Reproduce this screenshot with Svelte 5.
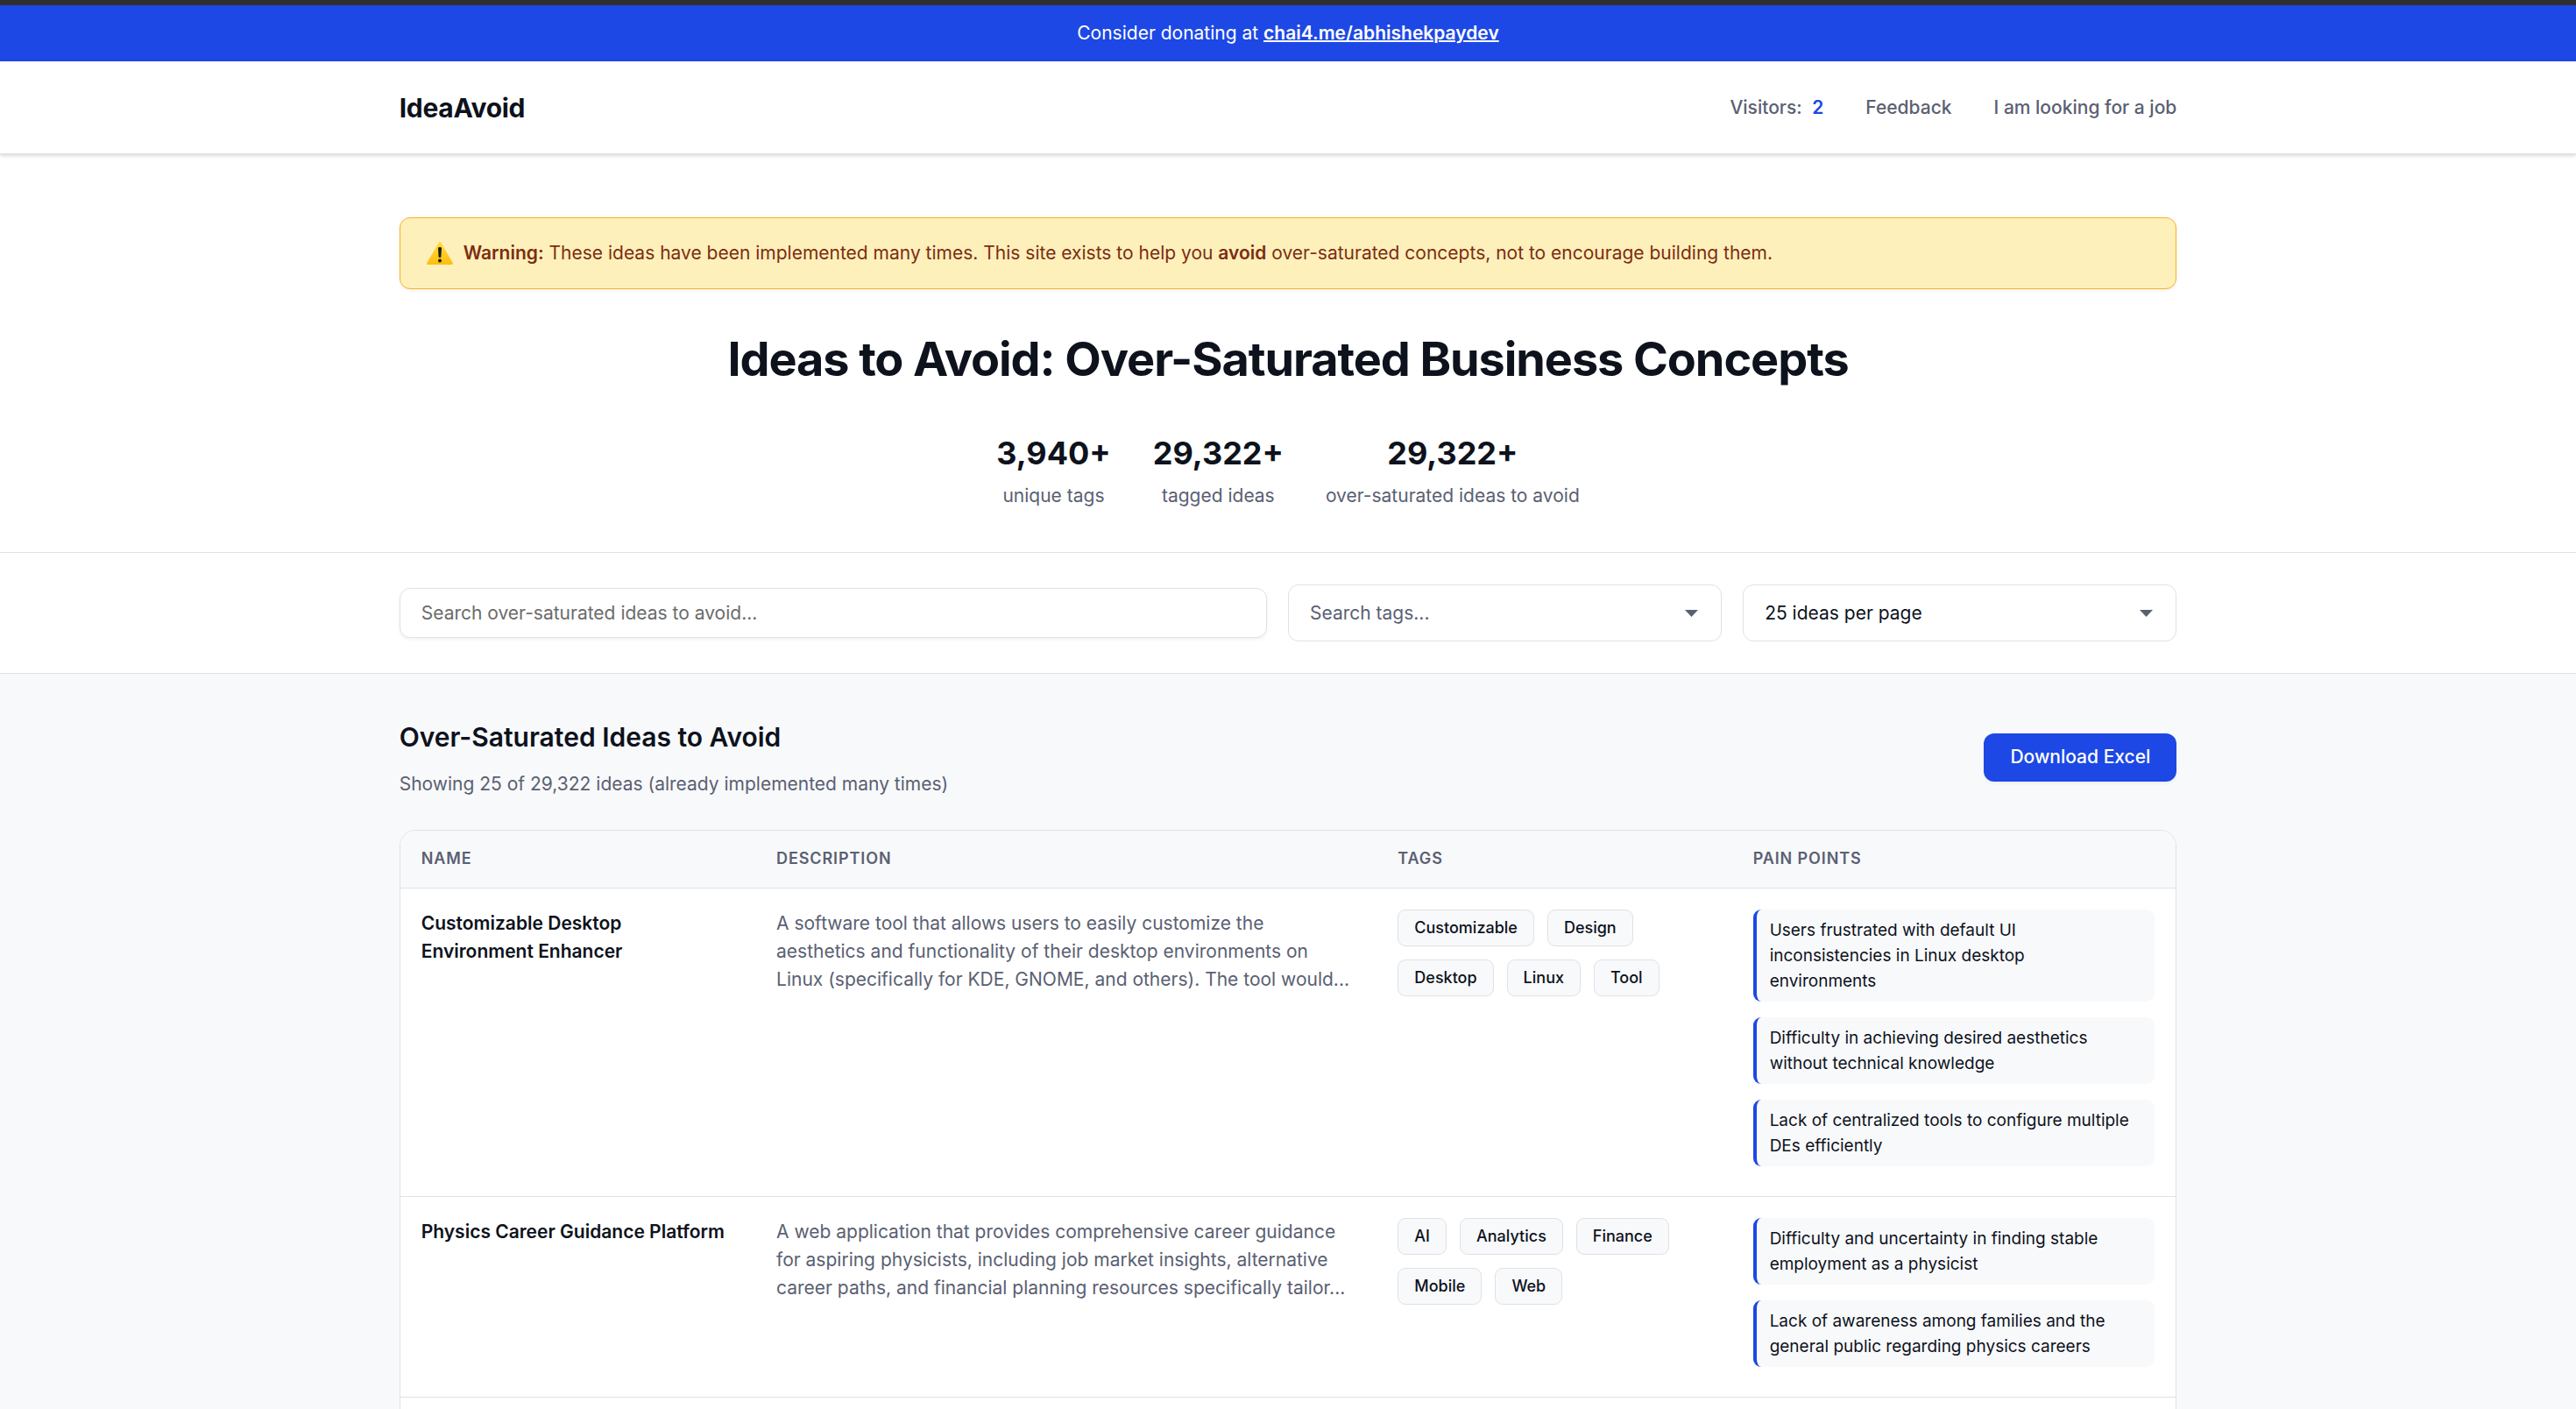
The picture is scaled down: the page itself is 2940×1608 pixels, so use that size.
<script>
    let search = "";
    let selectedTag = "";
    let perPage = 25;

    const stats = [
        {value: "3,940+", label: "unique tags"},
        {value: "29,322+", label: "tagged ideas"},
        {value: "29,322+", label: "over-saturated ideas to avoid"}
    ];

    const ideas = [
        {
            name: "Customizable Desktop Environment Enhancer",
            description: "A software tool that allows users to easily customize the aesthetics and functionality of their desktop environments on Linux (specifically for KDE, GNOME, and others). The tool would...",
            tags: ["Customizable", "Design", "Desktop", "Linux", "Tool"],
            painPoints: [
                "Users frustrated with default UI inconsistencies in Linux desktop environments",
                "Difficulty in achieving desired aesthetics without technical knowledge",
                "Lack of centralized tools to configure multiple DEs efficiently"
            ]
        },
        {
            name: "Physics Career Guidance Platform",
            description: "A web application that provides comprehensive career guidance for aspiring physicists, including job market insights, alternative career paths, and financial planning resources specifically tailor...",
            tags: ["AI", "Analytics", "Finance", "Mobile", "Web"],
            painPoints: [
                "Difficulty and uncertainty in finding stable employment as a physicist",
                "Lack of awareness among families and the general public regarding physics careers"
            ]
        },
        {name: "", description: "", tags: [], painPoints: []}
    ];
</script>
<svelte:head>
    <title>IdeaAvoid</title>
</svelte:head>

<div class="donate">
    <p>Consider donating at <a href="https://chai4.me/abhishekpaydev">chai4.me/abhishekpaydev</a></p>
</div>

<header>
    <div class="container bar">
        <a class="logo" href="/">IdeaAvoid</a>
        <nav>
            <span>Visitors: <b>2</b></span>
            <a href="#feedback">Feedback</a>
            <a href="#job">I am looking for a job</a>
        </nav>
    </div>
</header>

<main>
    <section class="hero">
        <div class="container">
            <div class="warning">
                <svg viewBox="0 0 30 26" aria-hidden="true">
                    <defs>
                        <linearGradient id="sign" x1="0" y1="0" x2="0" y2="1">
                            <stop offset="0" stop-color="#ffdc3c"/>
                            <stop offset="1" stop-color="#fdbd10"/>
                        </linearGradient>
                    </defs>
                    <path d="M13.8 0.8Q15 -0.6 16.2 0.8L29.6 23.8Q30.4 26 28.4 26H1.6Q-0.4 26 0.4 23.8Z" fill="url(#sign)"/>
                    <path d="M13 6.8Q15 5.4 17 6.8L16.4 17.2Q15 18.8 13.6 17.2Z" fill="#1c1a12"/>
                    <circle cx="15" cy="21.6" r="2" fill="#1c1a12"/>
                </svg>
                <p><strong>Warning:</strong> These ideas have been implemented many times. This site exists to help you <strong>avoid</strong> over-saturated concepts, not to encourage building them.</p>
            </div>
            <h1>Ideas to Avoid: Over-Saturated Business Concepts</h1>
            <div class="stats">
                {#each stats as stat}
                    <div class="stat">
                        <strong>{stat.value}</strong>
                        <span>{stat.label}</span>
                    </div>
                {/each}
            </div>
        </div>
    </section>

    <section class="filters">
        <div class="container fields">
            <input type="text" aria-label="Search ideas" placeholder="Search over-saturated ideas to avoid..." bind:value={search}>
            <div class="select">
                <select class:empty={!selectedTag} aria-label="Tags" bind:value={selectedTag}>
                    <option value="">Search tags...</option>
                    <option value="AI">AI</option>
                    <option value="Design">Design</option>
                </select>
                <svg viewBox="0 0 15 8" aria-hidden="true"><path d="M0 0H15L7.5 8Z"/></svg>
            </div>
            <div class="select">
                <select aria-label="Ideas per page" bind:value={perPage}>
                    <option value={25}>25 ideas per page</option>
                    <option value={50}>50 ideas per page</option>
                </select>
                <svg viewBox="0 0 15 8" aria-hidden="true"><path d="M0 0H15L7.5 8Z"/></svg>
            </div>
        </div>
    </section>

    <section class="results">
        <div class="container">
            <div class="results-head">
                <div>
                    <h2>Over-Saturated Ideas to Avoid</h2>
                    <p>Showing {perPage} of 29,322 ideas (already implemented many times)</p>
                </div>
                <button type="button">Download Excel</button>
            </div>
            <div class="table-wrap">
                <table>
                    <thead>
                    <tr>
                        <th class="narrow">Name</th>
                        <th class="wide">Description</th>
                        <th class="narrow">Tags</th>
                        <th>Pain Points</th>
                    </tr>
                    </thead>
                    <tbody>
                    {#each ideas as idea}
                        <tr>
                            <td class="name">{idea.name}</td>
                            <td class="description">{idea.description}</td>
                            <td>
                                <div class="tags">
                                    {#each idea.tags as tag}
                                        <span>{tag}</span>
                                    {/each}
                                </div>
                            </td>
                            <td>
                                <ul>
                                    {#each idea.painPoints as point}
                                        <li>{point}</li>
                                    {/each}
                                </ul>
                            </td>
                        </tr>
                    {/each}
                    </tbody>
                </table>
            </div>
        </div>
    </section>
</main>

<style>
    :global(body) {
        background: #f8f9fb;
        color: #0d121c;
        font-family: Inter, "Liberation Sans", sans-serif;
        font-size: 21px;
        line-height: 32px;
        overflow: hidden;
    }

    h1, h2, p, ul {
        margin: 0;
        padding: 0;
    }

    .container {
        width: 69%;
        margin: 0 auto;
    }

    .donate {
        border-top: 6px solid #2f2f2f;
        padding: 16px 0;
        background: #1d48e5;
        color: #fff;
        text-align: center;
    }

    .donate a {
        color: #fff;
        font-weight: 600;
        text-decoration-thickness: 2px;
    }

    header {
        position: relative;
        background: #fff;
        border-bottom: 1px solid #dfe1e6;
        box-shadow: 0 2px 4px rgba(0, 0, 0, 0.15);
    }

    .bar {
        display: flex;
        align-items: center;
        justify-content: space-between;
        min-height: 105px;
    }

    .bar a {
        color: inherit;
        text-decoration: none;
    }

    .logo {
        font-size: 30px;
        font-weight: 700;
        letter-spacing: -0.01em;
    }

    nav {
        display: flex;
        gap: 48px;
        color: #5a6072;
        font-weight: 500;
    }

    nav b {
        margin-left: 6px;
        color: #1d48e5;
        font-weight: 600;
    }

    .hero {
        background: #fff;
        border-bottom: 1px solid #dfe1e6;
        padding: 72px 0 48px;
    }

    .warning {
        display: flex;
        align-items: center;
        gap: 12px;
        padding: 24px 30px;
        border: 1px solid #fbb11d;
        border-radius: 12px;
        background: #fef0bb;
        color: #7c2d12;
        box-shadow: 0 2px 4px rgba(0, 0, 0, 0.05);
    }

    .warning svg {
        width: 30px;
        height: 26px;
    }

    strong {
        font-weight: 600;
    }

    h1 {
        margin: 48px 0;
        font-size: 54px;
        line-height: 64px;
        font-weight: 700;
        letter-spacing: -0.02em;
        text-align: center;
    }

    .stats {
        display: flex;
        justify-content: center;
        gap: 48px;
    }

    .stat {
        display: flex;
        flex-direction: column;
        gap: 6px;
        text-align: center;
        color: #5a6072;
    }

    .stat strong {
        color: #0d121c;
        font-size: 36px;
        line-height: 54px;
        font-weight: 700;
    }

    .filters {
        background: #fff;
        border-bottom: 1px solid #dfe1e6;
        padding: 36px 0;
    }

    .fields {
        display: grid;
        grid-template-columns: 2fr 1fr 1fr;
        align-items: center;
        gap: 24px;
    }

    input, select {
        box-sizing: border-box;
        width: 100%;
        padding: 0 24px;
        border: 1px solid #dfe1e6;
        border-radius: 12px;
        background: #fff;
        color: #0d121c;
        font: inherit;
    }

    input {
        height: 57px;
        box-shadow: 0 2px 4px rgba(0, 0, 0, 0.05);
    }

    input::placeholder {
        color: #6b6b6b;
    }

    .select {
        display: grid;
        align-items: center;
    }

    .select > * {
        grid-area: 1 / 1;
    }

    select {
        height: 65px;
        appearance: none;
    }

    select.empty {
        color: #5a6072;
    }

    .select svg {
        justify-self: end;
        width: 15px;
        height: 8px;
        margin-right: 27px;
        fill: #5a6072;
        pointer-events: none;
    }

    .results {
        padding: 48px 0;
    }

    .results-head {
        display: flex;
        align-items: center;
        justify-content: space-between;
        margin-bottom: 36px;
    }

    h2 {
        margin-bottom: 14px;
        font-size: 30px;
        line-height: 48px;
        font-weight: 600;
    }

    .results-head p {
        color: #5a6072;
    }

    button {
        height: 55px;
        padding: 0 30px;
        border: 0;
        border-radius: 12px;
        background: #1d48e5;
        color: #fff;
        font: inherit;
        font-weight: 500;
        box-shadow: 0 2px 4px rgba(0, 0, 0, 0.05);
    }

    .table-wrap {
        overflow: hidden;
        border: 1px solid #dfe1e6;
        border-radius: 18px;
        background: #fff;
    }

    table {
        width: 100%;
        table-layout: fixed;
        border-collapse: separate;
        border-spacing: 0;
    }

    th {
        padding: 16px 24px 17px;
        border-bottom: 1px solid #dfe1e6;
        background: #f8f9fb;
        color: #5a6072;
        font-size: 18px;
        font-weight: 600;
        letter-spacing: 0.05em;
        text-align: left;
        text-transform: uppercase;
    }

    .narrow {
        width: 20%;
    }

    .wide {
        width: 35%;
    }

    th, td {
        box-sizing: border-box;
    }

    td {
        padding: 24px 24px 34px;
        border-bottom: 1px solid #dfe1e6;
        vertical-align: top;
    }

    .name {
        font-weight: 600;
    }

    .description {
        color: #5a6072;
    }

    .tags {
        display: flex;
        flex-wrap: wrap;
        gap: 15px;
    }

    .tags span {
        padding: 6px 18px;
        border: 1px solid #dfe1e6;
        border-radius: 9px;
        background: #f8f9fb;
        font-size: 18px;
        line-height: 28px;
        font-weight: 500;
    }

    ul {
        display: flex;
        flex-direction: column;
        gap: 18px;
        list-style: none;
    }

    li {
        padding: 9px 24px 9px 15px;
        border-left: 4px solid #1d48e5;
        border-radius: 9px;
        background: #f8f9fb;
        font-size: 19px;
        line-height: 29px;
    }
</style>
